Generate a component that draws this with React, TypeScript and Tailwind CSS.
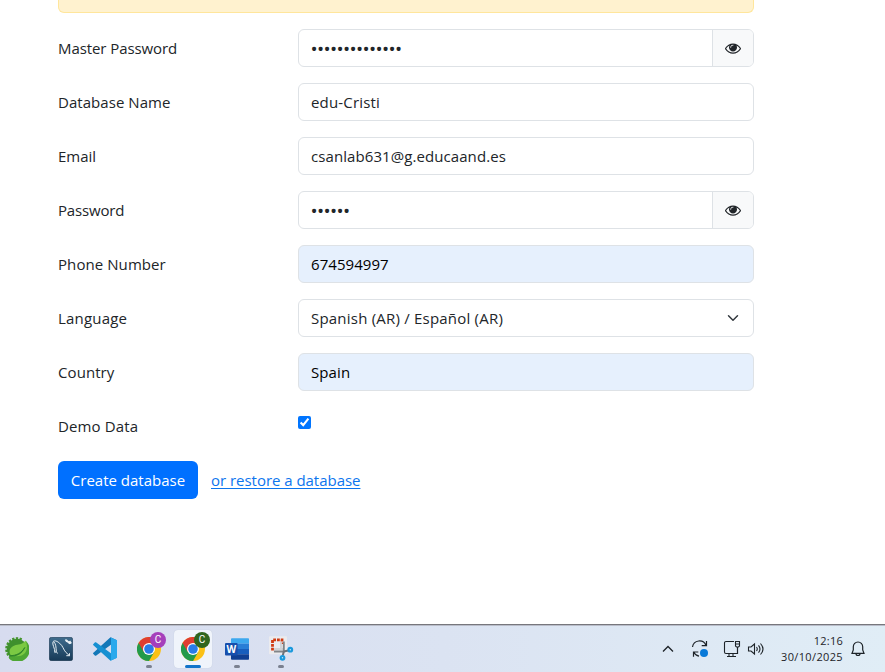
import type { ReactNode } from "react";

const inputBox = "flex h-[38px] w-[456px] items-center rounded-[6px] border border-[#dee2e6] overflow-hidden";

function Row({ label, tracking, children }: { label: string; tracking: string; children: ReactNode }) {
  return (
    <div className="flex h-[38px]">
      <div className={`w-[240px] shrink-0 pt-[7px] leading-6 ${tracking}`}>{label}</div>
      {children}
    </div>
  );
}

function Field({ value, tracking, filled = false }: { value: string; tracking: string; filled?: boolean }) {
  return (
    <div className={`${inputBox} px-3 ${filled ? "bg-[#e6f0fd] text-black" : "bg-white"}`}>
      <span className={tracking}>{value}</span>
    </div>
  );
}

function Secret({ length }: { length: number }) {
  return (
    <div className={inputBox}>
      <div className="flex-1 pl-[11.500px] pt-px text-[19px] leading-6 -tracking-[0.650px]">{"•".repeat(length)}</div>
      <div className="flex h-full w-[41px] items-center justify-center border-l border-[#dee2e6] bg-[#f8f9fa]">
        <svg width="16" height="16" viewBox="0 0 1792 1792" fill="#212529">
          <path d="M1664 960q-152-236-381-353 61 104 61 225 0 185-131.500 316.500t-316.500 131.500-316.500-131.500-131.500-316.500q0-121 61-225-229 117-381 353 133 205 333.500 326.500t434.500 121.500 434.500-121.500 333.500-326.500zm-720-384q0-20-14-34t-34-14q-125 0-214.500 89.500t-89.500 214.500q0 20 14 34t34 14 34-14 14-34q0-86 61-147t147-61q20 0 34-14t14-34zm848 384q0 34-20 69-140 230-376.500 368.500t-499.500 138.500-499.500-139-376.500-368q-20-35-20-69t20-69q140-229 376.500-368t499.500-139 499.500 139 376.500 368q20 35 20 69z" />
        </svg>
      </div>
    </div>
  );
}

function Spring() {
  const teeth = [220, 240, 260, 280, 300, 320, 340, 0, 20];
  return (
    <svg width="24" height="24" viewBox="0 0 24 24">
      {teeth.map((a) => (
        <rect key={a} x="10.800" y="0.200" width="2.400" height="4" fill="#46952e" transform={`rotate(${a} 12 12)`} />
      ))}
      <circle cx="12" cy="12" r="10.200" fill="#3f902d" />
      <path d="M21 4A12 12 0 0 1 4 21.500L6 17Z" fill="#4ea634" />
      <path d="M20.500 3.500c2.500 5.500 1.800 11-2 13.800-3.800 2.800-8 1.700-12.500 1.200-3-4-1-8.500 3.500-10 3.500-1.200 8-.6 11-5Z" fill="#7bc943" />
      <path d="M4.500 18.800c7-.3 11.500-2.300 15.300-8.300-3 6.500-8 9-15.300 8.300Z" fill="#2f842a" stroke="#2f842a" strokeWidth=".9" />
    </svg>
  );
}

function Workbench() {
  return (
    <svg width="24" height="24" viewBox="0 0 24 24">
      <defs>
        <linearGradient id="wb" x1="0" y1="0" x2="0" y2="1">
          <stop stopColor="#3f6c8d" />
          <stop offset="1" stopColor="#173a57" />
        </linearGradient>
      </defs>
      <rect x=".3" y=".3" width="23.400" height="23.400" rx="2.300" fill="url(#wb)" stroke="#19344b" strokeWidth=".6" />
      <path d="M8.500 16.500 7.300 14.500 5.800 15.500C6.300 11.500 2.800 7.500 4 4.800c1.500-2 4.500-.4 6.500 1.400 3.500 2.600 3.800 6.400 6.500 9.300l3.500 3.200h-3.200M20.500 18.700v-2.500M4.700 4.700C7 7 7 10 7.300 14.500" fill="none" stroke="#e4edf2" strokeWidth="1" />
      <path d="m17.500 3.500 3.500 3M16.500 2.500l1.500 2.300M20.500 4l1.700 2.500" fill="none" stroke="#e8eff4" strokeWidth="1.700" />
    </svg>
  );
}

function Code() {
  return (
    <svg width="24" height="24" viewBox="0 0 24 24">
      <path d="M17.500.2.4 15.700c-.5.5-.5 1 0 1.400l1.400 1.300c.5.400 1 .4 1.500.1L24 3.200 17.500.2Z" fill="#1478b8" />
      <path d="M17.500 23.800.4 8.300c-.5-.5-.5-1 0-1.400l1.400-1.300c.5-.4 1-.4 1.500-.1L24 20.800l-6.500 3Z" fill="#1690d2" />
      <path d="M17.200.2 24 3.200v17.600l-6.800 3c.5-.3.800-.7.800-1.400V1.600c0-.7-.3-1.100-.8-1.400Z" fill="#2ba9ec" />
    </svg>
  );
}

function Chrome({ badge }: { badge: string }) {
  return (
    <div className="relative size-6">
      <svg width="24" height="24" viewBox="0 0 24 24">
        <circle cx="12" cy="12" r="12" fill="#fbc116" />
        <path d="M12 12 1.600 6A12 12 0 0 0 12 24l5.200-9Z" fill="#229a4b" />
        <path d="M12 12 6.800 15 1.600 6A12 12 0 0 1 22.400 6H12Z" fill="#df3e31" />
        <circle cx="12" cy="12" r="6" fill="#fff" />
        <circle cx="12" cy="12" r="4.800" fill="#287ce8" />
      </svg>
      <span className={`absolute -top-[5px] left-[13px] flex size-4 items-center justify-center rounded-full font-[Roboto] text-[10px] leading-none text-white ${badge}`}>C</span>
    </div>
  );
}

function Word() {
  return (
    <svg width="24" height="24" viewBox="0 0 24 24">
      <path d="M7 1.300h16.200c.5 0 .8.300.8.800v4.600H6V2.100c0-.5.400-.8 1-.8Z" fill="#3da8ee" />
      <path d="M6 6.700h18V12H6Z" fill="#297ed6" />
      <path d="M6 12h18v5.300H6Z" fill="#185ebd" />
      <path d="M6 17.300h18v4.600c0 .5-.3.800-.8.800H7c-.6 0-1-.3-1-.8Z" fill="#103f92" />
      <rect y="6" width="12.600" height="12.600" rx="1" fill="#174fac" />
      <text x="6.300" y="15.800" textAnchor="middle" fill="white" fontFamily="Open Sans, sans-serif" fontSize="10" fontWeight="700">W</text>
    </svg>
  );
}

function Snip() {
  return (
    <svg width="24" height="24" viewBox="0 0 24 24" overflow="visible">
      <rect x="0" y="-.7" width="18" height="18" rx="1" fill="#ebebee" />
      <path d="M3.500 13.500V2.800H13V7" fill="none" stroke="#d13b12" strokeWidth="2.800" strokeDasharray="2.800 1" />
      <path d="M5 12h9M12 5v8" stroke="#d0d2d5" strokeWidth="1.800" />
      <path d="M14.800 4.500v10H5" fill="none" stroke="#818589" strokeWidth="1.900" />
      <path d="m14.800 14.500-1 4M14.800 14.500l4.500-1" stroke="#6b7178" strokeWidth="2" />
      <circle cx="13.500" cy="20.800" r="1.800" fill="#cfe9fa" stroke="#1b99dc" strokeWidth="2.200" />
      <circle cx="21.300" cy="12.700" r="1.800" fill="#cfe9fa" stroke="#1b99dc" strokeWidth="2.200" />
    </svg>
  );
}

function TaskItem({ children, mark = "", tile = false }: { children: ReactNode; mark?: string; tile?: boolean }) {
  return (
    <div className="flex h-[47px] w-11 shrink-0 items-center justify-center">
      <div className={`relative flex size-[38px] items-center justify-center rounded-[4px] ${tile ? "bg-[#f0f4fb] shadow-[0_0_1px_#b8c0d0]" : ""}`}>
        {children}
        {mark && <span className={`absolute bottom-0 h-[3px] rounded-full ${mark}`} />}
      </div>
    </div>
  );
}

function Taskbar() {
  return (
    <footer className="flex h-12 items-center border-t border-[#77777d] bg-linear-to-r from-[#d7dcef] via-[#dbe3f2] to-[#e0edf6] shadow-[inset_0_1px_0_#b9bdc9]">
      <div className="-ml-[5px] flex">
        <TaskItem><Spring /></TaskItem>
        <TaskItem><Workbench /></TaskItem>
        <TaskItem><Code /></TaskItem>
        <TaskItem mark="w-[6px] bg-[#7b8190]"><Chrome badge="bg-[#a53fbb]" /></TaskItem>
        <TaskItem tile mark="w-4 bg-[#1274ca]"><Chrome badge="bg-[#30651d]" /></TaskItem>
        <TaskItem mark="w-[6px] bg-[#7b8190]"><Word /></TaskItem>
        <TaskItem mark="w-[6px] bg-[#7b8190]"><Snip /></TaskItem>
      </div>
      <div className="ml-auto flex items-center pr-5 text-[#1d2328]">
        <svg className="mr-[17px]" width="12" height="8" viewBox="0 0 12 8" fill="none" stroke="currentColor" strokeWidth="1.300">
          <path d="M1 6.500 6 1.500l5 5" />
        </svg>
        <svg className="mr-[14px]" width="18" height="18" viewBox="0 0 18 18" fill="none" stroke="currentColor" strokeWidth="1.200">
          <path d="M1.500 7a7 7 0 0 1 13.500-1.500M15.500 1v4.700h-4.800M2.500 16.700V12h4.800M2.800 12.300A7 7 0 0 0 8 16.200" />
          <circle cx="13" cy="13" r="4" fill="#0879d8" stroke="none" />
        </svg>
        <svg className="mr-[6px]" width="18" height="18" viewBox="0 0 18 18" fill="none" stroke="currentColor" strokeWidth="1.100">
          <path d="M11 1.500H3A1.500 1.500 0 0 0 1.500 3v9A1.500 1.500 0 0 0 3 13.500h11.500V7.500M6 13.500v3m4-3v3M4 16.500h9" />
          <path d="M12.500 1.500h4V6l-1 1h-2l-1-1ZM14.500 7v7M12.500 4h4" />
        </svg>
        <svg className="mr-[14px]" width="18" height="16" viewBox="0 0 18 16" fill="none" stroke="currentColor" strokeWidth="1.100">
          <path d="M1.500 6v4H4l3.500 3V3L4 6ZM9.500 6q1.500 2 0 4M11.500 4.300q3 3.700 0 7.400M13.500 2.500q5 5.500 0 11" />
        </svg>
        <div className="mr-[8px] w-[64px] whitespace-nowrap text-right text-[11px] leading-4">
          <div className="tracking-[0.250px]">12:16</div>
          <div className="tracking-[0.360px]">30/10/2025</div>
        </div>
        <svg width="14" height="16" viewBox="0 0 14 16" fill="none" stroke="currentColor" strokeWidth="1.200">
          <path d="M7 1a4.700 4.700 0 0 0-4.700 4.700V9L1 12.300h12L11.700 9V5.700A4.700 4.700 0 0 0 7 1ZM5 12.500a2 2 0 0 0 4 0" />
        </svg>
      </div>
    </footer>
  );
}

export default function App() {
  return (
    <div className="flex h-[672px] w-[885px] flex-col overflow-hidden bg-white font-['Open_Sans',sans-serif] text-[15px] text-[#212529]">
      <main className="ml-[58px] h-[624px] w-[696px]">
        <div className="h-[13px] rounded-b-[6px] border border-t-0 border-[#ffe69c] bg-[#fff2cf]" />
        <div className="mt-4 flex flex-col gap-4">
          <Row label="Master Password" tracking="-tracking-[0.080px]"><Secret length={14} /></Row>
          <Row label="Database Name" tracking="tracking-[0.050px]"><Field value="edu-Cristi" tracking="tracking-[0.180px]" /></Row>
          <Row label="Email" tracking="tracking-[0px]"><Field value="csanlab631@g.educaand.es" tracking="tracking-[0.080px]" /></Row>
          <Row label="Password" tracking="-tracking-[0.180px]"><Secret length={6} /></Row>
          <Row label="Phone Number" tracking="tracking-[0.080px]"><Field filled value="674594997" tracking="tracking-[0.060px]" /></Row>
          <Row label="Language" tracking="tracking-[0.200px]">
            <div className={`${inputBox} justify-between pl-3 pr-3`}>
              <span className="tracking-[0.210px]">Spanish (AR) / Español (AR)</span>
              <svg width="16" height="12" viewBox="0 0 16 16" fill="none" stroke="#343a40" strokeWidth="2" strokeLinecap="round" strokeLinejoin="round">
                <path d="m2 5 6 6 6-6" />
              </svg>
            </div>
          </Row>
          <Row label="Country" tracking="tracking-[0.080px]"><Field filled value="Spain" tracking="tracking-[0.100px]" /></Row>
          <Row label="Demo Data" tracking="tracking-[0.130px]">
            <input type="checkbox" defaultChecked className="mt-[9px] size-[13px]" />
          </Row>
          <div className="flex items-center">
            <button className="h-[38px] w-[140px] whitespace-nowrap rounded-[6px] bg-[#0070ff] text-white">Create database</button>
            <a className="ml-[13px] -tracking-[0.030px] text-[#0c75ee] underline decoration-1 underline-offset-2">or restore a database</a>
          </div>
        </div>
      </main>
      <Taskbar />
    </div>
  );
}
